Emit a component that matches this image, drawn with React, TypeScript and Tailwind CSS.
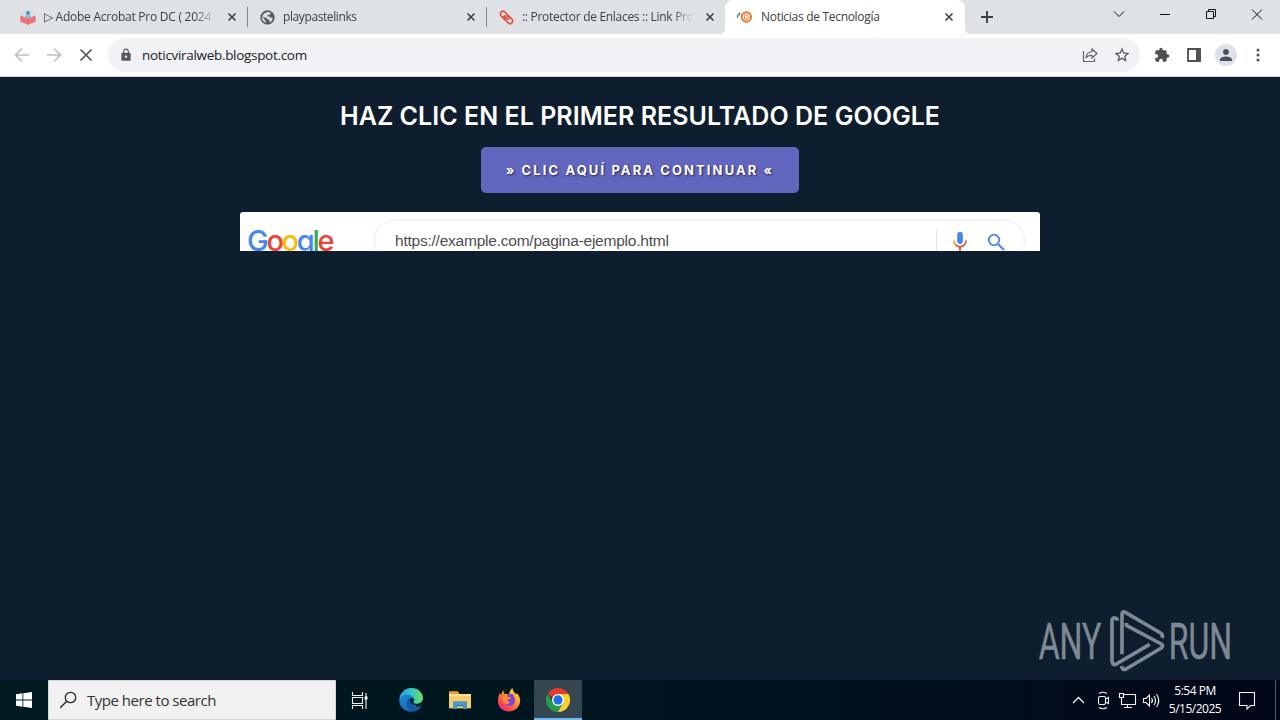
import type { ReactNode } from "react";
import { MdExtension, MdLock, MdOutlineStarBorder, MdPerson } from "react-icons/md";

type TabInfo = {
  title: string;
  icon: ReactNode;
  active?: boolean;
  tracking: string;
  divider?: boolean;
};

const ReaderIcon = () => (
  <svg viewBox="0 0 48 48" className="h-4 w-4">
    <path d="M8 10 18 2H32L40 12 37 28H11Z" fill="#c9e2ee" />
    <circle cx="24" cy="12" r="6" fill="#5a8fa8" />
    <path d="M14 28Q16 18 24 18T34 28Z" fill="#86b9d2" />
    <path d="M1 19 24 29 47 19V38L24 47 1 38Z" fill="#ee7377" />
    <path d="M24 29V47" stroke="#d75b63" strokeWidth="2" />
  </svg>
);

const GlobeIcon = () => (
  <svg viewBox="0 0 48 48" className="h-[15px] w-[15px]">
    <circle cx="24" cy="24" r="23" fill="#5a5e63" />
    <path d="M25 6Q34 7 35 10L30 15 24 16 24 21H31L34 25 40 25Q41 34 34 39L30 36 31 31 24 30 22 25 15 24 6 19Q5 34 18 41L19 36 14 32V28L7 22Q9 9 25 6Z" fill="#dee1e6" />
  </svg>
);

const LinkIcon = () => (
  <svg viewBox="0 0 32 32" className="h-[15px] w-[15px]" fill="none" stroke="#df5740" strokeWidth="3.6" strokeLinecap="round">
    <path d="M11 19 5 13C-1 7 7 -1 13 5L20 12C24 17 19 22 15 18L11 14" />
    <path d="M21 13 27 19C33 25 25 33 19 27L12 20C8 15 13 10 17 14" />
  </svg>
);

const BloggerIcon = () => (
  <svg viewBox="0 0 48 48" className="h-4 w-4">
    <path d="M3 17 1 25M8 12 7 17" stroke="#3d74ba" strokeWidth="4" strokeLinecap="round" />
    <circle cx="28" cy="24" r="14" fill="#fff6eb" stroke="#e17b30" strokeWidth="6" />
    <path d="M23 17H29Q32 17 32 21 35 22 35 26T30 31H23Z" fill="none" stroke="#e98a42" strokeWidth="3" />
    <path d="M27 22H29M27 27H31" stroke="#e17b30" strokeWidth="2" />
  </svg>
);

const CloseX = () => (
  <svg viewBox="0 0 10 10" className="h-2.5 w-2.5 shrink-0" stroke="#3c4043" strokeWidth="1.6">
    <path d="M1.5 1.5 8.5 8.5M8.5 1.5 1.5 8.5" />
  </svg>
);

const tabs: TabInfo[] = [
  { title: "▷ Adobe Acrobat Pro DC ( 2024", icon: <ReaderIcon />, tracking: "tracking-[-0.25px]", divider: true },
  { title: "playpastelinks", icon: <GlobeIcon />, tracking: "tracking-[-0.4px]", divider: true },
  { title: ":: Protector de Enlaces :: Link Pro", icon: <LinkIcon />, tracking: "tracking-[-0.3px]" },
  { title: "Noticias de Tecnología", icon: <BloggerIcon />, tracking: "tracking-[-0.3px]", active: true },
];

function Tab({ tab }: { tab: TabInfo }) {
  return (
    <div
      className={`relative flex h-full shrink-0 items-center pl-3 ${
        tab.active ? "w-60 rounded-t-lg bg-white" : "w-[239px]"
      }`}
    >
      <span className="flex w-4 shrink-0 justify-center">{tab.icon}</span>
      <span
        className={`ml-2 w-[171px] text-[12px] leading-4 whitespace-nowrap text-[#3c4043] ${tab.tracking} ${
          tab.active ? "" : "mask-r-from-88% mask-r-to-100%"
        }`}
      >
        {tab.title}
      </span>
      <span className="ml-3">
        <CloseX />
      </span>
      {tab.divider && <span className="absolute top-[7px] -right-px h-5 w-px bg-[#85898f]" />}
      {tab.active && (
        <>
          <span className="absolute bottom-0 -left-1.5 h-1.5 w-1.5 bg-[radial-gradient(circle_at_0_0,#dee1e6_6px,#fff_6.5px)]" />
          <span className="absolute -right-1.5 bottom-0 h-1.5 w-1.5 bg-[radial-gradient(circle_at_100%_0,#dee1e6_6px,#fff_6.5px)]" />
        </>
      )}
    </div>
  );
}

function TabStrip() {
  return (
    <div className="flex h-[34px] bg-[#dee1e6] pl-2">
      {tabs.map((tab) => (
        <Tab key={tab.title} tab={tab} />
      ))}
      <svg viewBox="0 0 12 12" className="mt-[11px] ml-4 h-3 w-3" stroke="#3c4043" strokeWidth="1.9">
        <path d="M6 0V12M0 6H12" />
      </svg>
      {/* Window controls */}
      <svg viewBox="0 0 180 34" className="ml-auto h-[34px] w-[180px]" fill="none" stroke="#111" strokeWidth="1">
        <path d="M14 11.5 19 16.5 24 11.5" />
        <path d="M60 14.5H70" />
        <path d="M106.5 11.5H113.5V18.5H106.5ZM108.5 11.5V9.5H115.5V16.5H113.5" />
        <path d="M152 9.5 162 19.5M162 9.5 152 19.5" />
      </svg>
    </div>
  );
}

function Toolbar() {
  return (
    <div className="flex h-[43px] items-center border-b border-[#d5dae0] bg-white">
      <svg viewBox="0 0 108 42" className="h-[42px] w-[108px]" fill="none" strokeWidth="1.7">
        <path d="M29 21H16M22 14.5 15.5 21 22 27.5" stroke="#bcbec1" />
        <path d="M47 21H60M54 14.5 60.5 21 54 27.5" stroke="#bcbec1" />
        <path d="M80.5 15.5 91.5 26.5M91.5 15.5 80.5 26.5" stroke="#4d5155" />
      </svg>
      <div className="flex h-[34px] w-[1032px] items-center rounded-full bg-[#f0f2f5] pl-[11px]">
        <MdLock className="h-3.5 w-3.5 text-[#55595e]" />
        <span className="ml-[9px] text-[13.5px] tracking-[-0.31px] text-[#202124]">noticviralweb.blogspot.com</span>
        <svg viewBox="0 0 16 16" className="mr-[15px] ml-auto h-4 w-4" fill="none" stroke="#5f6368" strokeWidth="1.2">
          <path d="M1.5 4V14.5H12.5V11.5" />
          <path d="M10 2 15 6.5 10 11V8.5Q6 8 4 11 4.5 5 10 4.5Z" />
        </svg>
        <MdOutlineStarBorder className="mr-[9px] h-[18px] w-[18px] text-[#4d5155]" />
      </div>
      <MdExtension className="ml-[14px] h-4 w-4 text-[#4d5155]" />
      <svg viewBox="0 0 14 14" className="ml-[17px] h-3.5 w-3.5">
        <path d="M1 1H13V13H1Z" fill="none" stroke="#4d5155" strokeWidth="1.8" />
        <path d="M9 1H14V13H9Z" fill="#4d5155" />
      </svg>
      <span className="ml-[14px] flex h-[22px] w-[22px] items-center justify-center rounded-full bg-[#dee1e6]">
        <MdPerson className="h-[18px] w-[18px] text-[#4a4e62]" />
      </span>
      <svg viewBox="0 0 4 14" className="ml-[19px] h-3.5 w-1" fill="#4d5155">
        <circle cx="2" cy="2" r="1.5" />
        <circle cx="2" cy="7" r="1.5" />
        <circle cx="2" cy="12" r="1.5" />
      </svg>
    </div>
  );
}

function SearchPreview() {
  return (
    <div className="mt-[19px] flex h-[39px] w-[800px] overflow-hidden rounded-t-[3px] bg-white pl-[7px]">
      <div className="mt-[14px] w-[127px] font-['Inter'] text-[29px] leading-[30px] font-medium tracking-[-2.3px]">
        <span className="text-[#4285f4]">G</span>
        <span className="text-[#ea4335]">o</span>
        <span className="text-[#fbbc05]">o</span>
        <span className="text-[#4285f4]">g</span>
        <span className="text-[#34a853]">l</span>
        <span className="text-[#ea4335]">e</span>
      </div>
      <div className="mt-2 flex h-[42px] w-[651px] shrink-0 items-start rounded-full border border-[#f0f0f2] pl-5 shadow-[0_0_3px_#e8e8ee]">
        <span className="mt-[8px] font-['Liberation_Sans'] text-[15.5px] leading-6 tracking-[-0.23px] text-[#4d4d50]">
          https://example.com/pagina-ejemplo.html
        </span>
        <span className="mt-2 mr-[16px] ml-auto h-8 w-px bg-[#e4e5e8]" />
        <svg viewBox="0 0 14 22" className="mt-[11px] mr-[20px] h-[22px] w-3.5" fill="none">
          <rect x="4.2" width="5.6" height="12" rx="2.4" fill="#4285f4" />
          <path d="M1 8.5Q1 11.5 3 13.2" stroke="#f6a623" strokeWidth="1.8" />
          <path d="M2.6 13Q7 16.5 11.2 13 13 11 13 8.5" stroke="#d9583f" strokeWidth="1.8" />
          <path d="M7 15V20" stroke="#d9583f" strokeWidth="1.8" />
        </svg>
        <svg viewBox="0 0 18 18" className="mt-3 mr-[19px] h-[18px] w-[18px]" fill="none" stroke="#5b8ce8" strokeWidth="2">
          <circle cx="7" cy="7" r="5.2" />
          <path d="M11 11 17 17" strokeWidth="2.4" />
        </svg>
      </div>
    </div>
  );
}

// strokes of the play emblem sit between the two words
function Watermark() {
  return (
    <svg viewBox="0 0 690 240" className="absolute right-[30px] bottom-0 h-20 w-[230px]">
      <g fill="#7e8993" stroke="#7e8993" strokeWidth="1.5" fontFamily="Roboto" fontSize="152" fontWeight="400">
        <text x="56" y="177" textLength="188" lengthAdjust="spacingAndGlyphs">ANY</text>
        <text x="446" y="177" textLength="190" lengthAdjust="spacingAndGlyphs">RUN</text>
      </g>
      <g fill="none" stroke="#7e8993" strokeWidth="11" strokeLinejoin="round">
        <path d="M291 62V57Q276 48 276 64V182Q277 198 289 192L389 133" />
        <path d="M306 163V43Q306 32 316 37L422 99Q430 105 426 114" />
        <path d="M319 69V76L424 132Q431 138 424 144L318 207Q308 212 304 198" />
      </g>
    </svg>
  );
}

const Edge = () => (
  <svg viewBox="0 0 48 48" className="h-6 w-6">
    <defs>
      <linearGradient id="edgeTop" x1="0" x2="1">
        <stop stopColor="#279fe2" />
        <stop offset=".5" stopColor="#30c5c4" />
        <stop offset="1" stopColor="#72df62" />
      </linearGradient>
      <linearGradient id="edgeSide" x1="0" y1="0" x2=".6" y2="1">
        <stop stopColor="#2390dc" />
        <stop offset="1" stopColor="#1268b8" />
      </linearGradient>
    </defs>
    <circle cx="24" cy="24" r="23.5" fill="url(#edgeSide)" />
    <path d="M30 29 48 22V31L45 36 36 38Z" fill="#04202c" />
    <path d="M20 20C11 27 15 45 29 47 38 46 43 41 45 36 34 41 21 35 21 24Z" fill="#17559f" />
    <path d="M1 22C4 8 13 0 25 0 39 0 48 10 48 20 48 31 34 34 29 30 27 28 31 26 30 22 28 16 23 13 17 13 9 13 4 18 1 22Z" fill="url(#edgeTop)" />
    <path d="M30 22C26 18 21 20 21 25 22 30 26 34 32 35L34 32C31 31 29 31 29 30 28 28 31 26 30 22Z" fill="#08283a" />
  </svg>
);

const Folder = () => (
  <svg viewBox="0 0 66 54" className="h-[18px] w-[22px]">
    <path d="M0 1H26L30 5V14H0Z" fill="#e9a32b" />
    <path d="M0 9H66V52H0Z" fill="#f5cd6b" />
    <path d="M0 9H66V15H0Z" fill="#ffe08a" />
    <path d="M12 31H54V54H42V42H24V54H12Z" fill="#4a96c8" />
    <path d="M22 42H44V46H22Z" fill="#257fbd" />
  </svg>
);

const Firefox = () => (
  <svg viewBox="0 0 48 48" className="h-6 w-6">
    <defs>
      <linearGradient id="foxBody" x1="1" y1="0" x2=".2" y2="1">
        <stop stopColor="#fff04a" />
        <stop offset=".45" stopColor="#ff9a2e" />
        <stop offset=".75" stopColor="#ff4f50" />
        <stop offset="1" stopColor="#e52176" />
      </linearGradient>
    </defs>
    <path d="M5 10 8 14 12 4 15 12 24 12C25 6 28 2 31 0 32 8 36 9 38 13L40 10C45 16 47 22 46 28 44 40 35 47 24 47 10 47 1 37 2 24 2 18 4 15 5 10Z" fill="url(#foxBody)" />
    <path d="M22 12H31Q36 18 36 25A11 11 0 0 1 14 25L18 20Z" fill="#7d46d8" />
    <path d="M10 20C15 14 20 15 23 18L28 19C27 23 21 23 20 25 22 27 24 28 26 27 25 31 19 34 15 31 12 27 12 23 10 20Z" fill="#ff8a2d" />
  </svg>
);

const Chrome = () => (
  <svg viewBox="0 0 48 48" className="h-6 w-6">
    <path d="M24 24 3.2 12A24 24 0 0 1 44.8 12Z" fill="#e33b2e" />
    <path d="M24 24 44.8 12A24 24 0 0 1 24 48Z" fill="#fccd2d" />
    <path d="M24 12H44.8L34.4 30Z" fill="#fccd2d" />
    <path d="M3.2 12A24 24 0 0 0 24 48L34.4 30H13.6Z" fill="#259b4b" />
    <circle cx="24" cy="24" r="12" fill="#fff" />
    <circle cx="24" cy="24" r="9.3" fill="#1b72e8" />
  </svg>
);

function Taskbar() {
  return (
    <div className="flex h-10 bg-linear-to-r from-[#001a20] via-[#00151f] to-[#020718] text-white">
      <div className="flex w-12 items-center justify-center">
        <svg viewBox="0 0 16 16" className="h-4 w-4" fill="#fff">
          <path d="M0 2.2 6.5 1.3V7.5H0ZM7.3 1.2 16 0V7.5H7.3ZM0 8.4H6.5V14.7L0 13.8ZM7.3 8.4H16V16L7.3 14.8Z" />
        </svg>
      </div>
      <div className="flex w-72 items-center border border-[#d2d4d5] bg-[#f1f1f1] pl-[11px]">
        <svg viewBox="0 0 18 18" className="-mt-px h-[18px] w-[18px]" fill="none" stroke="#222" strokeWidth="1.3">
          <circle cx="10.5" cy="6.5" r="5.2" />
          <path d="M6.7 10.3 0 17" />
        </svg>
        <span className="ml-[9px] text-[15px] tracking-[-0.48px] text-[#333]">Type here to search</span>
      </div>
      <div className="flex w-12 items-center justify-center pr-0.5">
        <svg viewBox="0 0 17 17" className="h-[17px] w-[17px]" fill="none" stroke="#eef3f5" strokeWidth="1.1">
          <path d="M1.5 0V3.5H11.5V0M1.5 17V13.5H11.5V17M1.5 5.5H11.5V11.5H1.5ZM15 1V17" />
          <path d="M13.5 4.5H16.5V7.5H13.5Z" fill="#fff" stroke="none" />
        </svg>
      </div>
      <div className="ml-[3px] flex w-12 items-center justify-center"><Edge /></div>
      <div className="ml-px flex w-12 items-center justify-center"><Folder /></div>
      <div className="ml-px flex w-12 items-center justify-center"><Firefox /></div>
      <div className="ml-px flex w-12 items-center justify-center border-b-2 border-[#76b9ed] bg-[#34464f] pt-0.5"><Chrome /></div>
      {/* System tray */}
      <svg viewBox="0 0 92 40" className="ml-auto h-10 w-[92px]" fill="none" stroke="#f2f4f6" strokeWidth="1.1">
        <path d="M1 23 6.5 17.5 12 23" strokeWidth="1.3" />
        <rect x="26.5" y="16.5" width="7" height="8" rx="1.5" />
        <path d="M33.5 19 36.5 17.5V23.5L33.5 22M27 13.5Q31 11 35 13.5M27 27.5Q31 30 35 27.5" />
        <path d="M52 14.5H63.5V24.5H49.5V19M55.5 24.5V27.5M52 27.5H60" />
        <path d="M47.5 13.5H51.5V17.5H47.5ZM49.5 17.5V21" />
        <path d="M71.5 18.5H74L77.5 15V26L74 22.5H71.5ZM79.5 18Q81.5 20.5 79.5 23M82 16Q85 20.5 82 25M84.5 14Q89 20.5 84.5 27" />
      </svg>
      <div className="flex w-[62px] flex-col items-center pt-0.5 text-[12px] leading-[18px] tracking-[-0.5px]">
        <span>5:54 PM</span>
        <span>5/15/2025</span>
      </div>
      <svg viewBox="0 0 54 40" className="h-10 w-[54px]" fill="none" stroke="#f2f4f6" strokeWidth="1.1">
        <path d="M13.5 12.5H28.5V25.5H24.5L21 29V25.5H13.5Z" />
        <path d="M49.5 0V40" stroke="#4f5662" />
      </svg>
    </div>
  );
}

export default function App() {
  return (
    <div className="flex h-[720px] w-[1280px] flex-col overflow-hidden font-['Open_Sans',sans-serif]">
      <TabStrip />
      <Toolbar />
      <main className="relative flex flex-1 flex-col items-center bg-[#0f1e2e]">
        <h1 className="mt-[23px] font-['Inter'] text-[25px] leading-8 font-semibold tracking-[0.04px] whitespace-nowrap text-white">
          HAZ CLIC EN EL PRIMER RESULTADO DE GOOGLE
        </h1>
        <button className="mt-[15px] h-[46px] w-[318px] rounded-[5px] bg-[#6366bf] pt-0.5 font-['Inter'] text-[13px] font-bold tracking-[2.1px] whitespace-nowrap text-white text-shadow-[1px_1px_2px_#25254a]">
          » CLIC AQUÍ PARA CONTINUAR «
        </button>
        <SearchPreview />
        <Watermark />
      </main>
      <Taskbar />
    </div>
  );
}
